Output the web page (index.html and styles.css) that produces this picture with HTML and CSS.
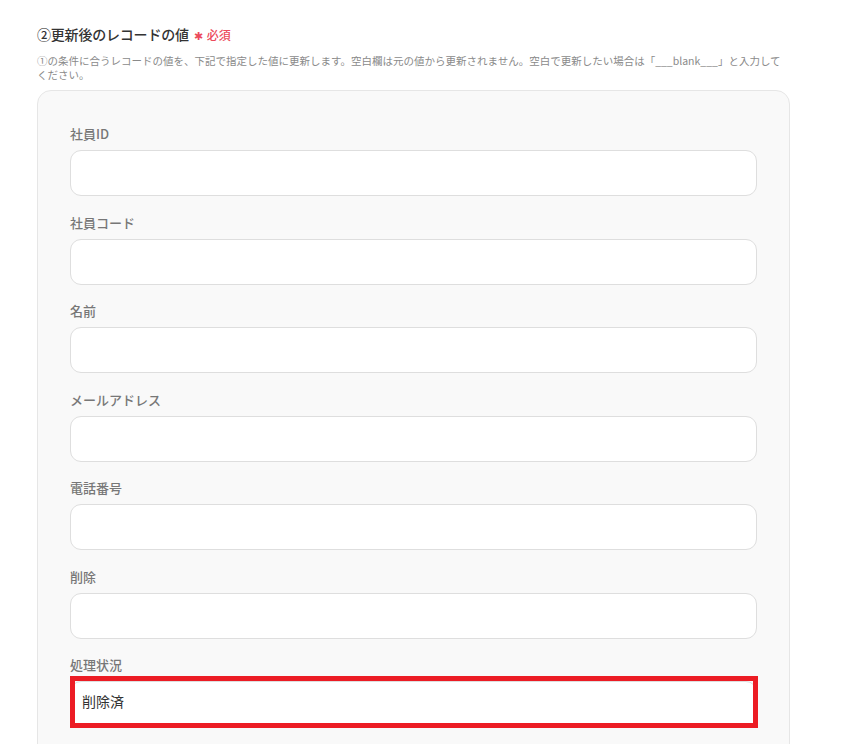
FILE: index.html
```
<!DOCTYPE html>
<html lang="ja">
<head>
<meta charset="utf-8">
<link rel="stylesheet" href="styles.css">
</head>
<body>
<div class="page">
  <div class="heading">
    <span class="title">②更新後のレコードの値</span>
    <span class="required"><span class="star">✱</span>必須</span>
  </div>
  <p class="desc">①の条件に合うレコードの値を、下記で指定した値に更新します。空白欄は元の値から更新されません。空白で更新したい場合は「___blank___」と入力してください。</p>
  <div class="panel">
    <div class="field">
      <div class="label">社員ID</div>
      <div class="input"></div>
    </div>
    <div class="field">
      <div class="label">社員コード</div>
      <div class="input"></div>
    </div>
    <div class="field">
      <div class="label">名前</div>
      <div class="input"></div>
    </div>
    <div class="field">
      <div class="label">メールアドレス</div>
      <div class="input"></div>
    </div>
    <div class="field">
      <div class="label">電話番号</div>
      <div class="input"></div>
    </div>
    <div class="field">
      <div class="label">削除</div>
      <div class="input"></div>
    </div>
    <div class="field">
      <div class="label">処理状況</div>
      <div class="input highlighted">削除済</div>
    </div>
  </div>
</div>
</body>
</html>
```
FILE: styles.css
```
* { box-sizing: border-box; }
html, body { margin: 0; padding: 0; background: #fff; }
body {
  font-family: "Noto Sans CJK JP", "Noto Sans", sans-serif;
  color: #333;
  overflow: hidden;
  height: 744px;
}
.page {
  padding: 24px 0 0 37px;
  width: 790px;
}
.heading {
  display: flex;
  align-items: center;
  height: 20px;
}
.title {
  font-size: 14px;
  font-weight: 500;
  color: #333;
  letter-spacing: -0.2px;
}
.required {
  display: inline-flex;
  align-items: center;
  margin-left: 5px;
  font-size: 12px;
  font-weight: 500;
  color: #ec4a5c;
}
.star {
  font-size: 11px;
  margin-right: 4px;
  margin-top: 2px;
}
.desc {
  margin: 10px 0 0 0;
  font-size: 10.5px;
  line-height: 14px;
  color: #8a8a8a;
  padding-right: 4px;
}
.panel {
  margin-top: 8px;
  background: #f9f9f9;
  border: 1px solid #e6e6e6;
  border-radius: 14px;
  padding: 33px 32px 40px 32px;
  display: flex;
  flex-direction: column;
  gap: 16.5px;
}
.field {
  display: flex;
  flex-direction: column;
}
.label {
  font-size: 13px;
  line-height: 20px;
  font-weight: 500;
  color: #777;
  margin-bottom: 6px;
}
.input {
  height: 46px;
  background: #fff;
  border: 1px solid #dedede;
  border-radius: 11px;
  padding: 0 11px 6px;
  font-size: 14px;
  color: #333;
  display: flex;
  align-items: center;
}
.highlighted {
  position: relative;
}
.highlighted::after {
  content: "";
  position: absolute;
  top: -6px;
  left: -1px;
  right: -2px;
  bottom: -2px;
  border: 5px solid #ec1c24;
}
```
